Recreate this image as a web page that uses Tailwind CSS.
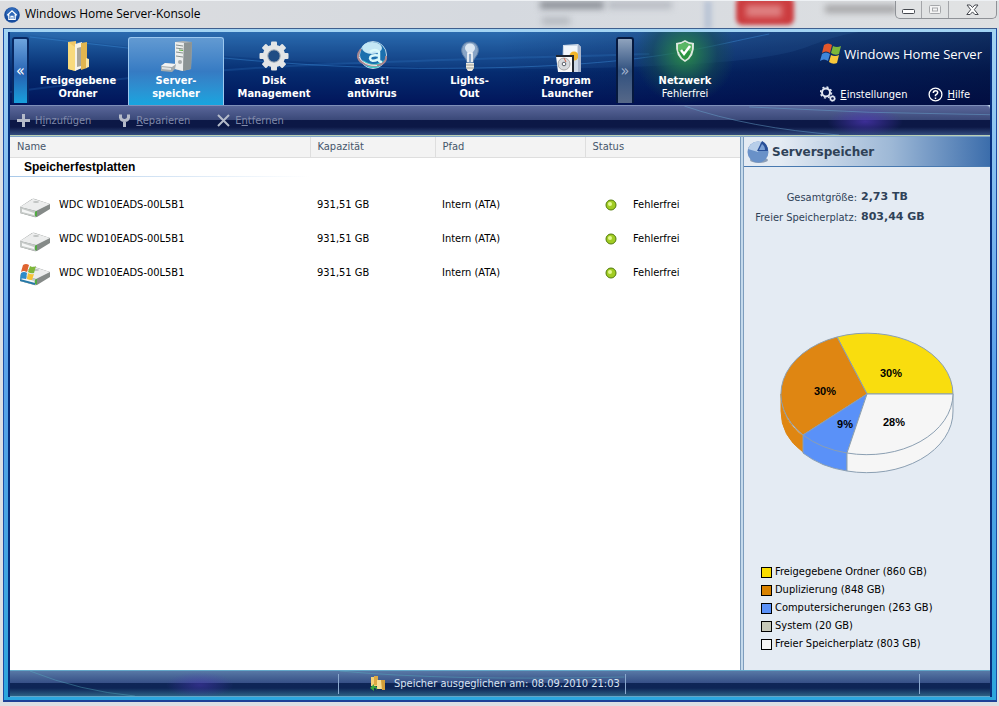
<!DOCTYPE html>
<html lang="de">
<head>
<meta charset="utf-8">
<title>Windows Home Server-Konsole</title>
<script src="https://cdn.jsdelivr.net/npm/@tailwindcss/browser@4"></script>
</head>
<body class="flex min-h-screen flex-col overflow-x-hidden bg-[#dcdfe3] font-['DejaVu_Sans_Condensed','Noto_Sans',sans-serif] text-[11px] leading-[13px] text-black">

<header class="relative flex h-7 shrink-0 items-center overflow-hidden border-t border-[#eef1f4] bg-linear-to-r from-[#dcdddf] via-[#d5d9df] to-[#dee0e2] pl-1">
  <div class="absolute top-0 left-[540px] h-2 w-16 bg-[#8d9198] blur-[3px]"></div>
  <div class="absolute top-0 left-[608px] h-2 w-16 bg-[#b9bdc4] blur-[3px]"></div>
  <div class="absolute top-4 left-[542px] h-2 w-7 bg-[#b6bac0] blur-[3px]"></div>
  <div class="absolute top-0 left-[704px] h-7 w-2 bg-[#bcc6d6] blur-[2px]"></div>
  <div class="absolute -top-1 left-[736px] h-7 w-[58px] rounded-md bg-[#cc3c3f] blur-[2px]"></div>
  <div class="absolute top-1 left-[746px] h-3 w-9 bg-[#df8081] blur-[3px]"></div>
  <div class="absolute top-1 left-[825px] h-2 w-[72px] bg-[#a6a6a8] blur-[3px]"></div>
  <svg class="relative size-4" viewBox="0 0 16 16" aria-hidden="true">
    <circle cx="8" cy="8" r="7.8" fill="#174c9e"/><circle cx="8" cy="6.500" r="6" fill="#3e7cc9" opacity=".6"/>
    <path d="M3.300 8.300 8 3.800l4.700 4.500M4.800 7.400v5.100h6.400V7.400M7 12.500V9.300h2v3.200" fill="none" stroke="#fff" stroke-width="1.200"/>
  </svg>
  <h1 class="relative ml-[5px] pb-0.5 font-['Open_Sans',sans-serif] text-xs leading-4">Windows Home Server-Konsole</h1>
  <div class="relative mr-0.5 ml-auto flex h-[18px] self-start overflow-hidden rounded-b-[5px] border border-t-0 border-[#8f9297] bg-[#e1e2e4]/80">
    <button aria-label="Minimieren" class="flex w-[26px] items-center justify-center border-r border-[#a3a5a9] pt-1">
      <svg width="13" height="6" viewBox="0 0 13 6"><rect x=".5" y=".5" width="12" height="4" rx="1" fill="#fff" stroke="#45484e"/></svg>
    </button>
    <button aria-label="Maximieren" disabled class="flex w-[27px] items-center justify-center border-r border-[#a3a5a9]">
      <svg width="12" height="10" viewBox="0 0 12 10"><rect x=".5" y=".5" width="11" height="8" rx="1" fill="#f4f4f4" stroke="#a6a8ab"/><rect x="3.500" y="3" width="5" height="3" fill="none" stroke="#a6a8ab"/></svg>
    </button>
    <button aria-label="Schließen" class="flex w-[47px] items-center justify-center">
      <svg width="13" height="12" viewBox="0 0 13 12"><path d="M1 1h3.200l2.300 2.500L8.800 1H12L8.300 5.700l3.900 4.800H8.900L6.500 7.900l-2.400 2.600H.8l3.900-4.800z" fill="#fff" stroke="#45484e"/></svg>
    </button>
  </div>
</header>

<div class="mr-0.5 mb-1 ml-[3px] flex grow flex-col border border-[#3e5f8e] border-x-[#1b4ba5] border-b-2 border-b-[#1e3f96] bg-linear-to-b from-[#a3d4f3] via-[#5aa2ea] to-[#2ba6dd] px-1 pt-[3px] pb-[3px]">
  <div class="flex grow flex-col border-x-2 border-[#06307f] bg-[#c5daec]">

    <!-- Navigation -->
    <div class="relative flex h-[73px] shrink-0 overflow-hidden bg-linear-to-b from-[#2767ab] via-[#062c70] via-55% to-[#02145a] text-white">
      <div class="absolute inset-y-0 right-0 left-1/2 bg-linear-to-r from-transparent via-[#020c3c]/40 to-[#020930]/60"></div>
      <svg class="absolute inset-0 size-full" viewBox="0 0 981 73" preserveAspectRatio="none" aria-hidden="true">
        <path d="M0 0C200 28 420 42 620 35S780 12 850 0L600 0Z" fill="#4b93d8" opacity=".1"/>
        <path d="M20 5C190 24 300 39 470 36S690 16 760 2" fill="none" stroke="#3d8cda" opacity=".45"/>
        <path d="M0 60C220 30 380 30 640 22" fill="none" stroke="#3d8cda" opacity=".2" stroke-width="2"/>
      </svg>
      <button aria-label="Zurück" class="relative mt-[5px] mb-0.5 ml-0.5 w-[17px] rounded-t-[3px] border-2 border-b-0 border-[#082963] bg-linear-to-b from-[#6da4dd] via-[#2461b1] via-55% to-[#17a0dc] text-base">«</button>

      <nav class="relative flex">
        <button class="flex w-[98px] flex-col items-center pt-2 font-bold">
          <svg class="mb-0.5 size-8 shrink-0" viewBox="0 0 32 32" aria-hidden="true">
            <path d="M6 2l8-1v30l-8-2z" fill="#f0c766"/><path d="M13 4l7-2v26l-7 3z" fill="#f5f2e8"/><path d="M15 8l4-1v19l-4 1z" fill="#a8a69b"/><path d="M19 3l6-1v26l-6 2z" fill="#e2b64f"/><path d="M6 2l7 5v24l-7-2z" fill="#f8da7c"/><path d="M24 18l3 1v8l-3 1z" fill="#f9e6a7"/>
          </svg>
          <span>Freigegebene<br>Ordner</span>
        </button>
        <button aria-current="page" class="mx-px mt-[5px] flex w-24 flex-col items-center rounded-t-[3px] border border-b-0 border-[#9cc8ef] bg-linear-to-b from-[#629ad2] via-[#367bc3] via-50% to-[#16a5df] pt-0.5 font-bold">
          <svg class="mb-0.5 size-8 shrink-0" viewBox="0 0 32 32" aria-hidden="true">
            <path d="M15 2l8-1 9 1-1 27-9 2-7-2z" fill="#aeb2b2"/><path d="M15 2l9 1-1 28-8-2z" fill="#eceeed"/><path d="M24 3l8-1-1 27-8 2z" fill="#8c9494"/><path d="M16 5l7 1M16 8l7 1M16 12l7 1M16 16l7 1" stroke="#87908e"/><circle cx="20" cy="22" r="2" fill="#a8acac"/><path d="M19 10l4 .5" stroke="#5cb33d"/><path d="M1 26l4-3 11 1-1 5-3 3-11-1z" fill="#a4abad"/><path d="M1 26l4-3 11 1-4 3z" fill="#f2f3f3"/><path d="M2 27l9 1v2l-9-1z" fill="#e1e4e4"/>
          </svg>
          <span>Server-<br>speicher</span>
        </button>
        <button class="flex w-[98px] flex-col items-center pt-2 font-bold">
          <svg class="mb-0.5 size-8 shrink-0" viewBox="-16 -16 32 32" aria-hidden="true">
            <g fill="#e3e5e6"><g id="teeth"><rect x="-3" y="-14.500" width="6" height="29" rx="1"/><rect x="-3" y="-14.500" width="6" height="29" rx="1" transform="rotate(90)"/></g><use href="#teeth" transform="rotate(45)"/></g>
            <circle r="8.700" fill="none" stroke="#e3e5e6" stroke-width="5"/><circle r="6.200" fill="#1f4c84" stroke="#a6afb8"/>
          </svg>
          <span>Disk<br>Management</span>
        </button>
        <button class="flex w-[98px] flex-col items-center pt-2 font-bold">
          <svg class="mb-0.5 size-8 shrink-0" viewBox="0 0 32 32" aria-hidden="true">
            <circle cx="17" cy="15" r="13.500" fill="#1b6fae" stroke="#b9d5e8"/><ellipse cx="16" cy="8" rx="10" ry="6" fill="#c3e6f5"/><path d="M7 20q11 8 21 0-4 9-11 8-7 0-10-8" fill="#3fd6cc"/>
            <path d="M14 12q5-4 9 0v8q0 2 3 2M22 15.500q-8-1-8 3 1 4 8 1" fill="none" stroke="#d9f8fb" stroke-width="2.500"/>
            <path d="M5 9C-2 18 4 23 13 25s18-1 17-9" fill="none" stroke="#a9878f" stroke-width="2"/><path d="M3 17q5 9 18 8.500" fill="none" stroke="#f1e7ed"/>
          </svg>
          <span>avast!<br>antivirus</span>
        </button>
        <button class="flex w-[97px] flex-col items-center pt-2 font-bold">
          <svg class="mb-0.5 size-8 shrink-0" viewBox="0 0 32 32" aria-hidden="true">
            <path d="M16 2C8 2 6 10 9 15c3 4 4 6 4 8h6c0-2 1-4 4-8 3-5 1-13-7-13" fill="#88a5c7" stroke="#5f7fa7"/><ellipse cx="16" cy="8" rx="5" ry="4.500" fill="#dbe7f3"/><path d="M14 22V13h4v9" fill="none" stroke="#fff" stroke-width="1.500"/><path d="M12 23h8v5l-2 3h-4l-2-3z" fill="#edebe1"/><path d="M12 25h8M12 28h8" stroke="#9c9b92"/>
          </svg>
          <span>Lights-<br>Out</span>
        </button>
        <button class="flex w-[98px] flex-col items-center pt-2 font-bold">
          <svg class="mb-0.5 size-8 shrink-0" viewBox="0 0 32 32" aria-hidden="true">
            <path d="M12 5l15-1 3 3v25H11z" fill="#cfdae8"/><path d="M13 6h13v9H13z" fill="#f2f6fb"/><circle cx="23" cy="16" r="4.500" fill="#f1b62b"/><path d="M27 4l3 3v25h-3z" fill="#aab6cc"/><path d="M5 16h17v16H7z" fill="#f9f9f9"/><path d="M5 16h17v16" fill="none" stroke="#20262f" stroke-width="2"/><circle cx="13" cy="24" r="6" fill="#d7dadd" stroke="#a9a9a9"/><circle cx="13" cy="24" r="1.800" fill="#fff" stroke="#59606a"/><path d="M13 18l2 4" stroke="#d2654b"/>
          </svg>
          <span>Program<br>Launcher</span>
        </button>
      </nav>

      <button aria-label="Weiter" class="relative mt-[5px] mb-0.5 w-[18px] rounded-t-[3px] border-2 border-b-0 border-[#06193f] bg-linear-to-b from-[#8fa3bd] via-[#31517f] via-50% to-[#566888] text-base text-[#9fb0cc]">»</button>

      <div class="relative flex w-[102px] flex-col items-center bg-radial-[at_50%_30%] from-[#2a8a49] via-[#164d50]/50 via-45% to-transparent to-70% pt-2">
        <svg class="mb-0.5 size-8 shrink-0" viewBox="0 0 32 32" aria-hidden="true">
          <path d="M16 0q4 3 9 3 1 14-9 19Q6 17 7 3q5 0 9-3" fill="#dde8df"/><path d="M16 2q3 2 7 2.700Q23 16 16 20 9 16 9 4.700 13 4 16 2" fill="#2b9440"/><path d="M16 2q3 2 7 2.700 0 4-1 7Q14 7 9 12V4.700Q13 4 16 2" fill="#5bb765"/><path d="M12 10l3 4 6-8" fill="none" stroke="#fff" stroke-width="2.500"/>
        </svg>
        <strong>Netzwerk</strong>
        <span>Fehlerfrei</span>
      </div>

      <div class="relative ml-auto flex flex-col items-end justify-between pt-[11px] pr-2 pb-[3px]">
        <div class="flex items-center gap-0.5 font-['Open_Sans',sans-serif] text-[13px] leading-[22px]">
          <svg class="size-[22px]" viewBox="0 0 22 22" aria-hidden="true">
            <path d="M4 2q4-3 8 0l-2 8q-4-3-8 0z" fill="#e3572b"/><path d="M13 3q4 2 8 0l-2 8q-4 2-8-1z" fill="#7cb83a"/><path d="M2 11q4-3 8 0l-2 7q-4-3-8 0z" fill="#3f86d9"/><path d="M11 12q4 2 8 0l-2 8q-4 2-8-1z" fill="#f8c83b"/>
          </svg>
          <span>Windows Home Server</span>
        </div>
        <div class="flex items-center pr-3">
          <a href="#einstellungen" class="flex items-center gap-1">
            <svg class="size-4" viewBox="0 0 16 16" fill="none" stroke="#e4e9f3" aria-hidden="true"><circle cx="6" cy="6.500" r="4" stroke-width="2"/><circle cx="6" cy="6.500" r="5.500" stroke-width="1.500" stroke-dasharray="2 2.300"/><circle cx="12.500" cy="12.500" r="2" stroke-width="1.300"/><circle cx="12.500" cy="12.500" r="3" stroke-dasharray="1 1.300"/></svg>
            <span><u>E</u>instellungen</span>
          </a>
          <a href="#hilfe" class="ml-[21px] flex items-center gap-1">
            <svg class="size-[15px]" viewBox="0 0 15 15" fill="none" stroke="#fff" aria-hidden="true"><circle cx="7.500" cy="7.500" r="6.400" stroke-width="1.300"/><path d="M5.300 6q0-2.300 2.200-2.300T9.700 5.800Q9.700 7 7.500 8.200v1M7.500 10.500V12" stroke-width="1.500"/></svg>
            <span><u>H</u>ilfe</span>
          </a>
        </div>
      </div>
    </div>

    <!-- Toolbar -->
    <div class="relative flex h-[31px] shrink-0 items-center overflow-hidden rounded-tr border-t border-b border-t-[#7f8fb9] border-b-[#b9cfb4] bg-linear-to-b from-[#5a679a] via-[#3a4878] via-48% to-[#0c1846] to-50% pl-1.5 text-[#8089a9]">
      <div class="absolute inset-x-0 bottom-0 h-2 bg-linear-to-b from-transparent to-[#334c7e]"></div>
      <svg class="absolute inset-0 size-full" viewBox="0 0 981 30" preserveAspectRatio="none" aria-hidden="true">
        <defs><radialGradient id="violet"><stop stop-color="#5138b8" stop-opacity=".7"/><stop offset="1" stop-color="#5138b8" stop-opacity="0"/></radialGradient></defs>
        <ellipse cx="856" cy="16" rx="38" ry="15" fill="url(#violet)"/><path d="M675 0Q740 23 830 30M740 1Q860 8 981 9" fill="none" stroke="#69a3cd" opacity=".5"/>
      </svg>
      <button disabled class="relative flex items-center gap-1"><svg class="size-[15px]" viewBox="0 0 15 15" aria-hidden="true"><path d="M7.500 1v13M1 7.500h13" stroke="#b5bbc9" stroke-width="3"/></svg><span>H<u>i</u>nzufügen</span></button>
      <button disabled class="relative ml-[26px] flex items-center gap-1"><svg class="size-[15px]" viewBox="0 0 15 15" aria-hidden="true"><path d="M3.500 1.500v3Q4 7.500 7.500 7.500T11.500 4.500v-3M7.500 7v7" stroke="#b5bbc9" stroke-width="3" fill="none"/></svg><span><u>R</u>eparieren</span></button>
      <button disabled class="relative ml-[26px] flex items-center gap-1"><svg class="size-[15px]" viewBox="0 0 15 15" aria-hidden="true"><path d="M2 2l11 11M13 2 2 13" stroke="#b5bbc9" stroke-width="2"/></svg><span>E<u>n</u>tfernen</span></button>
    </div>

    <div class="flex grow border-t border-[#7fa4c9]">
      <main class="grow border-r border-[#7d9dbd] bg-white">
        <table class="w-full table-fixed border-collapse text-left">
          <colgroup><col class="w-[300px]"><col class="w-[125px]"><col class="w-[150px]"><col></colgroup>
          <thead>
            <tr class="h-5 border-b border-[#dedede] bg-[#f3f3f3] text-[#46566b]">
              <th class="border-r border-[#dedede] pl-[7px] font-normal">Name</th>
              <th class="border-r border-[#dedede] pl-[7px] font-normal">Kapazität</th>
              <th class="border-r border-[#dedede] pl-[7px] font-normal">Pfad</th>
              <th class="pl-[7px] font-normal">Status</th>
            </tr>
          </thead>
          <tbody>
            <tr><th colspan="4" class="pb-[11px]"><div class="h-[19px] w-[300px] bg-linear-to-r from-[#a9c9e9] to-white pb-px"><div class="h-full bg-white pt-0.5 pl-[14px] font-['Liberation_Sans',sans-serif] text-xs leading-[14px]">Speicherfestplatten</div></div></th></tr>
            <tr class="h-[34px]">
              <td class="pl-[9px]"><div class="flex items-center gap-2"><svg class="mt-2 h-6 w-8" viewBox="0 0 32 24" aria-hidden="true"><g id="disk"><path d="M1 10 13 2q1-.5 2-.3L31 7v5L18 20l-2 .3L1 16z" fill="#858a88"/><path d="M1 10 14 1.800 31 7 17 14z" fill="#eceded"/><path d="M1 10v6l16 4.300V14z" fill="#c5c9c7"/><path d="M3 12v3l12 3v-2z" fill="#f5f6f6"/><path d="M16 14.500v5l2-.5v-5z" fill="#51aa42"/><ellipse cx="17" cy="5" rx="3" ry="1" fill="#bfc2c1"/></g></svg><span class="whitespace-nowrap">WDC WD10EADS-00L5B1</span></div></td>
              <td class="pl-[7px]">931,51 GB</td><td class="pl-[7px]">Intern (ATA)</td>
              <td class="pl-5"><div class="flex items-center gap-4"><svg class="size-3" viewBox="0 0 12 12" aria-hidden="true"><g id="ok"><circle cx="6" cy="6" r="5" fill="#a1cc23" stroke="#527b0b"/><circle cx="5" cy="5" r="2" fill="#e3f891"/></g></svg>Fehlerfrei</div></td>
            </tr>
            <tr class="h-[34px]">
              <td class="pl-[9px]"><div class="flex items-center gap-2"><svg class="mt-2 h-6 w-8" viewBox="0 0 32 24" aria-hidden="true"><use href="#disk"/></svg><span class="whitespace-nowrap">WDC WD10EADS-00L5B1</span></div></td>
              <td class="pl-[7px]">931,51 GB</td><td class="pl-[7px]">Intern (ATA)</td>
              <td class="pl-5"><div class="flex items-center gap-4"><svg class="size-3" viewBox="0 0 12 12" aria-hidden="true"><use href="#ok"/></svg>Fehlerfrei</div></td>
            </tr>
            <tr class="h-[34px]">
              <td class="pl-[9px]"><div class="flex items-center gap-2"><svg class="mt-2 h-6 w-8 overflow-visible" viewBox="0 0 32 24" aria-hidden="true"><use href="#disk"/><path d="M1 14l15 4v2L1 16z" fill="#2679a8"/><path d="M4 0q3-2 6 0L8 7Q5 5 2 7z" fill="#df6430"/><path d="M11 1q3 2 6 0l-2 7q-3 1-6-1z" fill="#7fb73b"/><path d="M2 8q3-2 6 0l-1 6q-4-1-6 0z" fill="#2d8bc9"/><path d="M9 8q3 2 6 1l-2 6q-3 0-5-1z" fill="#f7c334"/></svg><span class="whitespace-nowrap">WDC WD10EADS-00L5B1</span></div></td>
              <td class="pl-[7px]">931,51 GB</td><td class="pl-[7px]">Intern (ATA)</td>
              <td class="pl-5"><div class="flex items-center gap-4"><svg class="size-3" viewBox="0 0 12 12" aria-hidden="true"><use href="#ok"/></svg>Fehlerfrei</div></td>
            </tr>
          </tbody>
        </table>
      </main>

      <aside class="ml-0.5 flex w-[247px] shrink-0 flex-col border-l border-[#7d9dbd] bg-[#e4ebf3]">
        <h2 class="flex h-[30px] items-center gap-0.5 border-b border-[#4879b0] bg-linear-to-r from-[#e4ebf3] from-15% via-[#9db8d6] via-60% to-[#3b6dab] pl-0.5 font-['DejaVu_Sans',sans-serif] text-xs font-bold text-[#2f4258]">
          <svg class="size-6" viewBox="0 0 24 24" aria-hidden="true"><ellipse cx="13" cy="20" rx="9" ry="3" fill="#8b9db5"/><circle cx="12" cy="12" r="10.500" fill="#6991c8"/><path d="M12 12 2 9A10.500 10.500 0 0 1 15 2z" fill="#b7cee9"/><path d="M11 11 16 1q6 3 6 10z" fill="#284f98"/><path d="M13 10 16 4q3 2 3 6z" fill="#7aa0d5"/></svg>
          Serverspeicher
        </h2>
        <dl class="mt-5 grid grid-cols-[113px_1fr] items-center gap-x-1 text-[#2f4258]">
          <dt class="text-right whitespace-nowrap">Gesamtgröße:</dt><dd class="font-['DejaVu_Sans',sans-serif] font-bold leading-5">2,73 TB</dd>
          <dt class="text-right whitespace-nowrap">Freier Speicherplatz:</dt><dd class="font-['DejaVu_Sans',sans-serif] font-bold leading-5">803,44 GB</dd>
        </dl>
        <svg class="mx-auto mt-auto h-[144px] w-[176px]" viewBox="0 0 176 144" role="img" aria-label="Speicherbelegung" font-family="Liberation Sans, Arial, sans-serif" font-size="11" font-weight="bold" text-anchor="middle">
          <g stroke="#8b9fb2" stroke-linejoin="round">
            <path d="M2 62v17q0 25 22 41V104Q2 88 2 62" fill="#df8612" stroke="#df8612"/>
            <path d="M24 103v18q18 14 44 18V121" fill="#5a91f8"/>
            <path d="M68 121v18A86 61 0 0 0 174 79V62" fill="#f6f6f6"/>
            <path d="M88 62h86A86 61 0 0 0 58 5z" fill="#f9dd0e"/>
            <path d="M88 62 58 5A86 61 0 0 0 24 103z" fill="#df8612"/>
            <path d="M88 62 24 103A86 61 0 0 0 68 121z" fill="#5a91f8"/>
            <path d="M88 62 68 121A86 61 0 0 0 174 62z" fill="#f6f6f6"/>
          </g>
          <text x="112" y="45">30%</text><text x="46" y="63">30%</text><text x="66" y="96">9%</text><text x="115" y="94">28%</text>
        </svg>
        <ul class="mt-[87px] mb-[17px] pl-[17px] leading-[18px]">
          <li class="flex items-center gap-[3px]"><i class="mt-px size-[11px] border border-black bg-[#fadd00]"></i>Freigegebene Ordner (860 GB)</li>
          <li class="flex items-center gap-[3px]"><i class="mt-px size-[11px] border border-black bg-[#d98200]"></i>Duplizierung (848 GB)</li>
          <li class="flex items-center gap-[3px]"><i class="mt-px size-[11px] border border-black bg-[#5a91f8]"></i>Computersicherungen (263 GB)</li>
          <li class="flex items-center gap-[3px]"><i class="mt-px size-[11px] border border-black bg-[#c6c8b8]"></i>System (20 GB)</li>
          <li class="flex items-center gap-[3px]"><i class="mt-px size-[11px] border border-black bg-[#f6f6f6]"></i>Freier Speicherplatz (803 GB)</li>
        </ul>
      </aside>
    </div>

    <!-- Status bar -->
    <footer class="relative flex h-[27px] shrink-0 items-center border-y border-[#63a7c9] bg-linear-to-b from-[#5878a5] via-[#364f86] via-48% to-[#0e2556] to-50% text-[#d9e4f2]">
      <div class="absolute inset-x-0 bottom-0 h-2 bg-linear-to-b from-transparent to-[#2d6183]"></div>
      <svg class="absolute inset-0 size-full" viewBox="0 0 981 25" preserveAspectRatio="none" aria-hidden="true"><ellipse cx="190" cy="14" rx="34" ry="13" fill="url(#violet)" opacity=".7"/><path d="M20 0Q70 20 125 25M330 0Q440 10 615 6" fill="none" stroke="#58b2c3" opacity=".4"/></svg>
      <div class="relative h-5 w-[329px] border-r border-[#8ba9cf]"></div>
      <div class="relative flex h-5 w-[287px] items-center gap-2 border-r border-[#8ba9cf] pl-[30px] whitespace-nowrap">
        <svg class="size-[17px]" viewBox="0 0 17 17" aria-hidden="true"><path d="M2 2h7v9H2z" fill="#f5d176"/><path d="M5 1h4v9H5z" fill="#dca944"/><path d="M8 5h8v9H8z" fill="#f8dd92"/><path d="M12 5h4v10h-3z" fill="#d39e3a"/><path d="M1 13l4-4v2q4 0 3 4-1-2-3-2v3z" fill="#39a43e"/></svg>
        <span>Speicher ausgeglichen am: 08.09.2010 21:03</span>
      </div>
      <div class="relative ml-auto h-5 w-[71px] border-l border-[#8ba9cf]"></div>
    </footer>
  </div>
</div>
</body>
</html>
